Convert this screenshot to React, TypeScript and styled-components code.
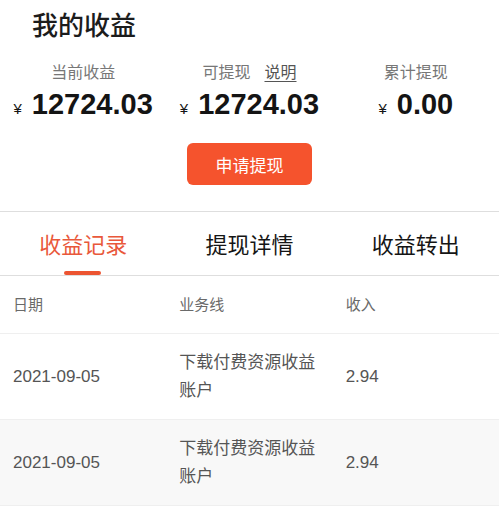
import React from "react";
import styled, { createGlobalStyle } from "styled-components";

const GlobalStyle = createGlobalStyle`
  body {
    margin: 0;
    background: #ffffff;
    font-family: "Liberation Sans", "Noto Sans CJK SC", sans-serif;
  }
`;

const Page = styled.div`
  width: 499px;
  height: 512px;
  overflow: hidden;
  background: #ffffff;
`;

const Summary = styled.div`
  display: flex;
  flex-direction: column;
  border-bottom: 1px solid #dedede;
  padding-bottom: 26px;
`;

const Title = styled.h1`
  margin: 0;
  padding: 8px 0 0 32px;
  height: 44px;
  font-size: 26px;
  line-height: 36px;
  font-weight: 500;
  color: #1c1c1c;
`;

const Stats = styled.div`
  display: grid;
  grid-template-columns: repeat(3, 1fr);
  margin-top: 10px;
`;

const Stat = styled.div`
  display: flex;
  flex-direction: column;
  align-items: center;
`;

const StatLabel = styled.div`
  display: flex;
  gap: 14px;
  font-size: 16px;
  line-height: 22px;
  color: #777777;
`;

const HelpLink = styled.span`
  color: #555555;
  text-decoration: underline;
  text-underline-offset: 3px;
`;

const StatValue = styled.div`
  display: flex;
  align-items: baseline;
  margin-top: 3px;
  font-size: 29px;
  line-height: 34px;
  font-weight: 700;
  color: #141414;
`;

const Yen = styled.span`
  font-size: 15px;
  font-weight: 400;
  margin-right: 10px;
`;

const WithdrawButton = styled.button`
  align-self: center;
  margin-top: 17px;
  width: 125px;
  height: 42px;
  border: none;
  border-radius: 6px;
  background: #f5532d;
  color: #ffffff;
  font-family: inherit;
  font-size: 17px;
`;

const Tabs = styled.div`
  display: grid;
  grid-template-columns: repeat(3, 1fr);
  height: 63px;
  border-bottom: 1px solid #dedede;
`;

const Tab = styled.div<{ $active?: boolean }>`
  position: relative;
  display: flex;
  align-items: center;
  justify-content: center;
  padding-bottom: 1px;
  font-size: 22px;
  color: ${(p) => (p.$active ? "#e9583b" : "#151515")};

  &::after {
    content: "";
    display: ${(p) => (p.$active ? "block" : "none")};
    position: absolute;
    left: 50%;
    bottom: 0;
    width: 37px;
    height: 4px;
    margin-left: -19px;
    border-radius: 2px;
    background: #ec5431;
  }
`;

const Row = styled.div<{ $shaded?: boolean; $header?: boolean }>`
  display: grid;
  grid-template-columns: repeat(3, 1fr);
  align-items: center;
  height: ${(p) => (p.$header ? "57px" : "85px")};
  border-bottom: 1px solid #efefef;
  background: ${(p) => (p.$shaded ? "#f8f8f8" : "#ffffff")};
  font-size: ${(p) => (p.$header ? "15px" : "17px")};
  color: ${(p) => (p.$header ? "#6a6a6a" : "#555555")};
`;

const Cell = styled.div`
  padding-left: 13px;
  line-height: 28px;
`;

const BizCell = styled(Cell)`
  max-width: 140px;
`;

const records = [
  { date: "2021-09-05", biz: "下载付费资源收益账户", amount: "2.94" },
  { date: "2021-09-05", biz: "下载付费资源收益账户", amount: "2.94" },
];

const App = () => {
  return (
    <Page>
      <GlobalStyle />
      <Summary>
        <Title>我的收益</Title>
        <Stats>
          <Stat>
            <StatLabel>当前收益</StatLabel>
            <StatValue>
              <Yen>¥</Yen>12724.03
            </StatValue>
          </Stat>
          <Stat>
            <StatLabel>
              可提现<HelpLink>说明</HelpLink>
            </StatLabel>
            <StatValue>
              <Yen>¥</Yen>12724.03
            </StatValue>
          </Stat>
          <Stat>
            <StatLabel>累计提现</StatLabel>
            <StatValue>
              <Yen>¥</Yen>0.00
            </StatValue>
          </Stat>
        </Stats>
        <WithdrawButton>申请提现</WithdrawButton>
      </Summary>
      <Tabs>
        <Tab $active>收益记录</Tab>
        <Tab>提现详情</Tab>
        <Tab>收益转出</Tab>
      </Tabs>
      <Row $header>
        <Cell>日期</Cell>
        <Cell>业务线</Cell>
        <Cell>收入</Cell>
      </Row>
      {records.map((r, i) => (
        <Row key={i} $shaded={i % 2 === 1}>
          <Cell>{r.date}</Cell>
          <BizCell>{r.biz}</BizCell>
          <Cell>{r.amount}</Cell>
        </Row>
      ))}
    </Page>
  );
};

export default App;
